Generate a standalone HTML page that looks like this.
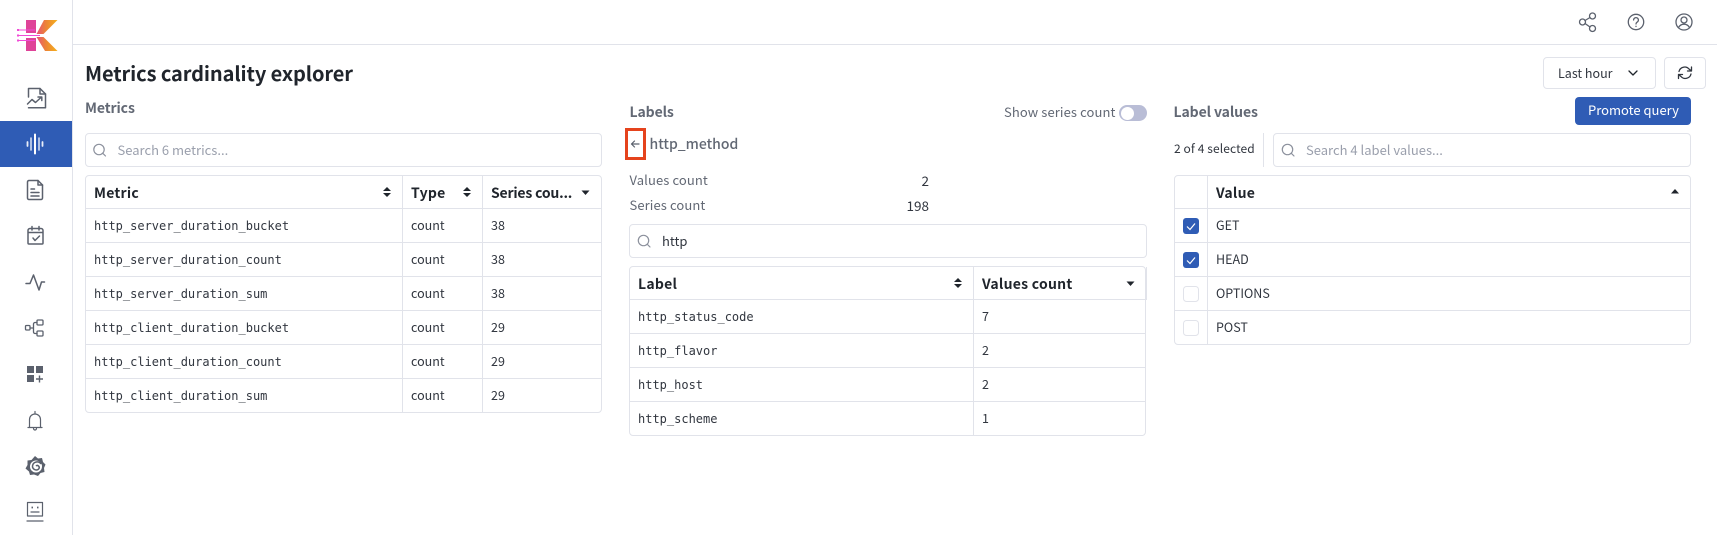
<!DOCTYPE html>
<html><head><meta charset="utf-8"><style>
html,body{margin:0;padding:0;background:#fff}
body{width:1717px;height:535px;position:relative;overflow:hidden;font-family:"Noto Sans CJK JP","Liberation Sans",sans-serif;font-size:12.5px;color:#31363f}
.t{position:absolute;white-space:nowrap;line-height:20px;letter-spacing:0}
.b{font-weight:700;font-size:14px;color:#20252c;letter-spacing:.25px}
.h{font-weight:700;font-size:14px;color:#626874;letter-spacing:-.1px}
.g{color:#626874;font-size:13px;letter-spacing:.1px}
.p{color:#9a9fac;font-size:13px}
.m{font-family:"DejaVu Sans Mono","Liberation Mono",monospace;font-size:12px;letter-spacing:0;color:#31363f;margin-top:1px}
.box{position:absolute;box-sizing:border-box;border:1px solid #e1e3ea;border-radius:4px;background:#fff}
.l{position:absolute;background:#e1e3ea}
svg{position:absolute;left:0;top:0}
</style></head><body>
<div class="l" style="left:72px;top:0;width:1px;height:535px"></div>
<div class="l" style="left:72px;top:44px;width:1645px;height:1px"></div>
<div style="position:absolute;left:0;top:121px;width:72px;height:46px;background:#2f5cb5"></div>

<div class="t" style="left:85px;top:62px;font-size:20px;line-height:22px;font-weight:700;color:#20252c;letter-spacing:-.1px">Metrics cardinality explorer</div>

<!-- Metrics -->
<div class="t h" style="left:85px;top:98px">Metrics</div>
<div class="box" style="left:85px;top:133px;width:517px;height:34px"></div>
<div class="t p" style="left:117.500px;top:140px">Search 6 metrics...</div>
<div class="box" style="left:85px;top:175px;width:517px;height:238px"></div>
<div class="l" style="left:402px;top:175px;width:1px;height:238px"></div>
<div class="l" style="left:482px;top:175px;width:1px;height:238px"></div>
<div class="l" style="left:85px;top:208px;width:517px;height:1px"></div>
<div class="l" style="left:85px;top:242px;width:517px;height:1px"></div>
<div class="l" style="left:85px;top:276px;width:517px;height:1px"></div>
<div class="l" style="left:85px;top:310px;width:517px;height:1px"></div>
<div class="l" style="left:85px;top:344px;width:517px;height:1px"></div>
<div class="l" style="left:85px;top:378px;width:517px;height:1px"></div>
<div class="t b" style="left:94px;top:183px">Metric</div>
<div class="t b" style="left:411px;top:183px">Type</div>
<div class="t b" style="left:491px;top:183px;letter-spacing:-.2px">Series cou...</div>
<div class="t m" style="left:94px;top:215px">http_server_duration_bucket</div><div class="t" style="left:411px;top:215px">count</div><div class="t" style="left:491px;top:215px">38</div>
<div class="t m" style="left:94px;top:249px">http_server_duration_count</div><div class="t" style="left:411px;top:249px">count</div><div class="t" style="left:491px;top:249px">38</div>
<div class="t m" style="left:94px;top:283px">http_server_duration_sum</div><div class="t" style="left:411px;top:283px">count</div><div class="t" style="left:491px;top:283px">38</div>
<div class="t m" style="left:94px;top:317px">http_client_duration_bucket</div><div class="t" style="left:411px;top:317px">count</div><div class="t" style="left:491px;top:317px">29</div>
<div class="t m" style="left:94px;top:351px">http_client_duration_count</div><div class="t" style="left:411px;top:351px">count</div><div class="t" style="left:491px;top:351px">29</div>
<div class="t m" style="left:94px;top:385px">http_client_duration_sum</div><div class="t" style="left:411px;top:385px">count</div><div class="t" style="left:491px;top:385px">29</div>

<!-- Labels -->
<div class="t h" style="left:629.500px;top:102px">Labels</div>
<div class="t g" style="left:1004px;top:102px">Show series count</div>
<div style="position:absolute;left:1119px;top:105px;width:28px;height:16px;border-radius:8px;background:#b9bdd6"></div>
<div style="position:absolute;left:1120.500px;top:106.500px;width:13px;height:13px;border-radius:7px;background:#fff"></div>
<div style="position:absolute;box-sizing:border-box;left:625px;top:128px;width:21px;height:32px;border:3px solid #e5431d"></div>
<div class="t h" style="left:649.500px;top:134px;font-weight:500;letter-spacing:0">http_method</div>
<div class="t g" style="left:629.500px;top:170px">Values count</div>
<div class="t" style="left:829px;top:170px;width:100px;text-align:right;font-size:13.500px">2</div>
<div class="t g" style="left:629.500px;top:195px">Series count</div>
<div class="t" style="left:829px;top:195px;width:100px;text-align:right;font-size:13.500px">198</div>
<div class="box" style="left:629px;top:224px;width:518px;height:34px"></div>
<div class="t" style="left:662px;top:231px;font-size:13px">http</div>
<div class="box" style="left:629px;top:266px;width:517px;height:170px"></div>
<div class="l" style="left:973px;top:266px;width:1px;height:170px"></div>
<div class="l" style="left:629px;top:299px;width:518px;height:1px"></div>
<div class="l" style="left:1146px;top:267px;width:1px;height:33px"></div>
<div class="l" style="left:629px;top:333px;width:517px;height:1px"></div>
<div class="l" style="left:629px;top:367px;width:517px;height:1px"></div>
<div class="l" style="left:629px;top:401px;width:517px;height:1px"></div>
<div class="t b" style="left:638px;top:274px">Label</div>
<div class="t b" style="left:982px;top:274px">Values count</div>
<div class="t m" style="left:638px;top:306px">http_status_code</div><div class="t" style="left:982px;top:306px">7</div>
<div class="t m" style="left:638px;top:340px">http_flavor</div><div class="t" style="left:982px;top:340px">2</div>
<div class="t m" style="left:638px;top:374px">http_host</div><div class="t" style="left:982px;top:374px">2</div>
<div class="t m" style="left:638px;top:408px">http_scheme</div><div class="t" style="left:982px;top:408px">1</div>

<!-- Label values -->
<div class="t h" style="left:1173.500px;top:102px">Label values</div>
<div style="position:absolute;left:1575px;top:97px;width:116px;height:28px;border-radius:4px;background:#2f5cb5"></div>
<div class="t" style="left:1588px;top:100px;color:#fff;font-size:13px">Promote query</div>
<div class="t" style="left:1174px;top:139px;font-size:12px;letter-spacing:.1px">2 of 4 selected</div>
<div class="l" style="left:1263px;top:133px;width:1px;height:34px"></div>
<div class="box" style="left:1273px;top:133px;width:418px;height:34px"></div>
<div class="t p" style="left:1306px;top:140px">Search 4 label values...</div>
<div class="box" style="left:1174px;top:175px;width:517px;height:170px"></div>
<div class="l" style="left:1207px;top:175px;width:1px;height:170px"></div>
<div class="l" style="left:1174px;top:208px;width:517px;height:1px"></div>
<div class="l" style="left:1174px;top:242px;width:517px;height:1px"></div>
<div class="l" style="left:1174px;top:276px;width:517px;height:1px"></div>
<div class="l" style="left:1174px;top:310px;width:517px;height:1px"></div>
<div class="t b" style="left:1216px;top:183px">Value</div>
<div class="t" style="left:1216px;top:215px">GET</div>
<div class="t" style="left:1216px;top:249px">HEAD</div>
<div class="t" style="left:1216px;top:283px">OPTIONS</div>
<div class="t" style="left:1216px;top:317px">POST</div>

<!-- top controls -->
<div class="box" style="left:1543px;top:57px;width:113px;height:32px"></div>
<div class="t" style="left:1558px;top:63px">Last hour</div>
<div class="box" style="left:1664px;top:57px;width:42px;height:32px"></div>

<svg width="1717" height="535" viewBox="0 0 1717 535" fill="none">
<defs><linearGradient id="k" x1="36" y1="0" x2="58" y2="0" gradientUnits="userSpaceOnUse"><stop offset="0" stop-color="#e8507a"/><stop offset=".45" stop-color="#ec8436"/><stop offset="1" stop-color="#f5b21a"/></linearGradient></defs>
<!-- logo -->
<path d="M26 20H36V33H26ZM26 38H36V51H26Z" fill="#df4398"/>
<path d="M44 20H57.500L43.500 34H36.500ZM36.500 37H43.500L57.500 51H45Z" fill="url(#k)"/>
<path d="M18 30H35M18 35.500H40M18 40.500H35" stroke="#f04bd6" stroke-width="1"/>
<path d="M17 29h2v2h-2zM17 34.500h2v2h-2zM17 39.500h2v2h-2z" fill="#f04bd6"/>
<g stroke="#5b616d" stroke-width="1.500" stroke-linecap="round" stroke-linejoin="round">
<!-- report -->
<path d="M28.500 97V88.500H40L45.500 94V107.800H28.500"/><path d="M40 88.500V94H45.500"/><path d="M27.500 104L32 99.500L35.500 102.500L41.500 97M38 97H41.800V100.500"/>
<!-- doc -->
<path d="M27.500 182a1.500 1.500 0 0 1 1.500-1.500H38L42.500 185V198a1.500 1.500 0 0 1-1.500 1.500H29a1.500 1.500 0 0 1-1.500-1.500Z"/><path d="M38 180.500V185H42.500M31 189H34.500M31 192.500H39M31 196H39"/>
<!-- calendar -->
<path d="M28 230.500a2 2 0 0 1 2-2H41a2 2 0 0 1 2 2V243a1 1 0 0 1-1 1H29a1 1 0 0 1-1-1ZM28 232.500H43M32 226.500V230M39 226.500V230M33 238L35 240.500L39.500 236"/>
<!-- pulse -->
<path d="M26 283.500H30L33.500 275L39 290L41.500 282H44.500"/>
<!-- flow -->
<g stroke-width="1.300"><rect x="25.500" y="325.500" width="4.500" height="4.500" rx="1"/><rect x="37" y="320" width="6" height="5" rx="1"/><rect x="37" y="331" width="6" height="5" rx="1"/><path d="M30 328H33.500M37 322.500H35a1.500 1.500 0 0 0-1.500 1.500V332a1.500 1.500 0 0 0 1.500 1.500H37"/></g>
<!-- bell -->
<path d="M29.500 427V419.500a5.500 5.500 0 0 1 11 0V427M28 427.500H42M35 411.500V414M33.500 428.500a1.500 1.500 0 0 0 3 0" stroke-width="1.200"/>
<!-- robot -->
<path d="M27.500 502.500H42.500V516H27.500ZM31 512H39M27 521H43" stroke-width="1.200"/>
<!-- top icons -->
<g stroke-width="1.300">
<circle cx="1582.500" cy="22" r="3"/><circle cx="1592.500" cy="16" r="3"/><circle cx="1592.500" cy="28.500" r="3"/><path d="M1585 20.500L1590 17.500M1585 23.500L1590 27"/>
<circle cx="1636" cy="22" r="7.700"/><path d="M1633.600 20a2.400 2.400 0 1 1 3.600 2.100c-.8.500-1.200 1-1.200 1.900"/><path d="M1636 26.300v.2"/>
<circle cx="1684" cy="22" r="8"/><circle cx="1684" cy="20" r="3"/><path d="M1678.500 27.500c1.500-2.500 3.300-3.300 5.500-3.300s4 .8 5.500 3.300"/>
<!-- chevron -->
<path d="M1629 71L1633 75L1637 71" stroke="#20252c"/>
<!-- refresh -->
<path d="M1679 71.500a5.800 5.800 0 0 1 10-2.500L1691.500 71M1691.500 67V71H1687.500M1691 74a5.800 5.800 0 0 1-10 2.500L1678.500 74.500M1678.500 78.500V74.500H1682.500" stroke="#31363f"/>
</g>
<!-- back arrow -->
<path d="M639 144H631.500M634.500 141L631.500 144L634.500 147" stroke-width="1.200"/>
</g>
<!-- active nav -->
<path d="M35 134.500V153.500" stroke="#fff" stroke-width="2" stroke-linecap="round"/>
<path d="M31 138V150M39 138V150" stroke="#dbe3f4" stroke-width="1.500" stroke-linecap="round"/>
<path d="M27.500 142V146M42.500 142V146" stroke="#e8edf8" stroke-width="1.800" stroke-linecap="round"/>
<!-- dash -->
<path d="M27 366H34V373H27ZM36 366H43V373H36ZM27 375H34V382H27Z" fill="#5b616d"/>
<path d="M39.500 375.500V382.500M36 379H43" stroke="#5b616d" stroke-width="1.400"/>
<!-- grafana-like -->
<path d="M35 456L38 458.500L42 458L43 462L45.500 464.500L44 468L44.500 472L40.500 473L38 476L34 474.500L30 475L29 471.500L25.500 468.500L27.500 465L27.500 460.500L31.500 460Z" fill="#5b616d"/>
<circle cx="36" cy="466.500" r="6" fill="#fff"/>
<path d="M41 464C39 460.500 33 461.500 32.500 466C32.300 469.500 37 471.500 39 468.500C40 466.500 37.500 464.500 36 466" stroke="#5b616d" stroke-width="1.500"/>
<path d="M31.500 507.500h1.500M37 507.500h1.500" stroke="#5b616d" stroke-width="1.800"/>
<!-- search icons -->
<g stroke="#8c919d" stroke-width="1.200" stroke-linecap="round">
<circle cx="99" cy="149.500" r="5.200"/><path d="M102.800 153.300L105.500 156"/>
<circle cx="643.500" cy="240.500" r="5.200"/><path d="M647.300 244.300L650 247"/>
<circle cx="1287.500" cy="149.500" r="5.200"/><path d="M1291.300 153.300L1294 156"/>
</g>
<!-- sort carets -->
<g fill="#20252c">
<path d="M383 191L387 187L391 191ZM383 193L387 197L391 193Z"/>
<path d="M463 191L467 187L471 191ZM463 193L467 197L471 193Z"/>
<path d="M581.500 190.500H589.500L585.500 195Z"/>
<path d="M954 282L958 278L962 282ZM954 284L958 288L962 284Z"/>
<path d="M1126.500 281.500H1134.500L1130.500 286Z"/>
<path d="M1671 193.500H1679L1675 189Z"/>
</g>
<!-- checkboxes -->
<rect x="1183" y="218" width="16" height="16" rx="3" fill="#2f5cb5"/>
<rect x="1183" y="252" width="16" height="16" rx="3" fill="#2f5cb5"/>
<path d="M1187 226.500L1190 229.500L1195 223.500M1187 260.500L1190 263.500L1195 257.500" stroke="#fff" stroke-width="1.200"/>
<rect x="1183.500" y="286.500" width="15" height="15" rx="3" fill="#fff" stroke="#e1e3ea"/>
<rect x="1183.500" y="320.500" width="15" height="15" rx="3" fill="#fff" stroke="#e1e3ea"/>
</svg>
</body></html>
